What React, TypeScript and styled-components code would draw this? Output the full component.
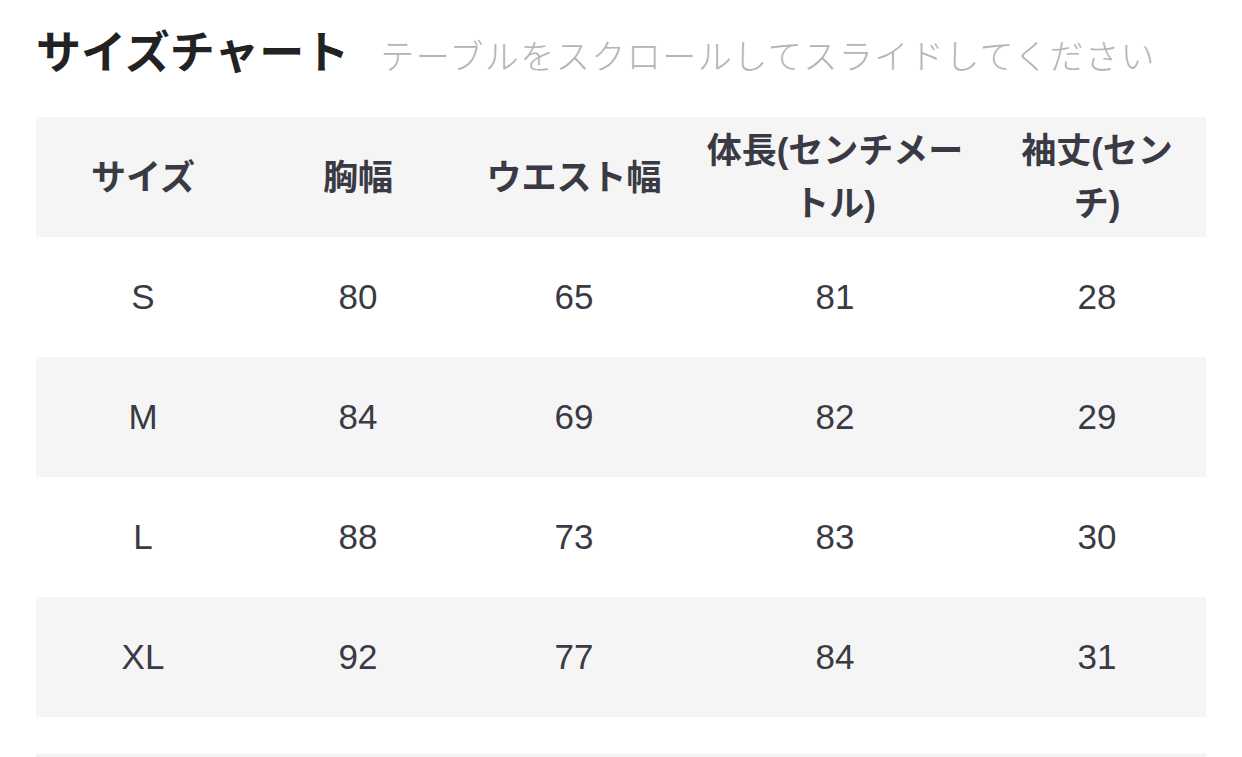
import React, { FC } from 'react';
import styled, { createGlobalStyle } from 'styled-components';

const GlobalStyle = createGlobalStyle`
  html, body {
    margin: 0;
    padding: 0;
    background: #fff;
  }
  body {
    font-family: 'Liberation Sans', 'Noto Sans CJK JP', sans-serif;
  }
`;

const Page = styled.div`
  width: 1242px;
  height: 757px;
  overflow: hidden;
  padding: 0 36px;
  box-sizing: border-box;
`;

const Heading = styled.div`
  display: flex;
  align-items: baseline;
  height: 48px;
  white-space: nowrap;
  padding-top: 26px;
  margin-bottom: 43px;
`;

const Title = styled.h2`
  flex-shrink: 0;
  margin: 0;
  font-family: 'Noto Sans CJK JP', sans-serif;
  font-weight: 700;
  font-size: 45px;
  line-height: 48px;
  color: #222;
`;

const Hint = styled.span`
  flex-shrink: 0;
  margin-left: 31px;
  font-family: 'Noto Sans CJK JP', sans-serif;
  font-weight: 300;
  font-size: 34px;
  line-height: 48px;
  letter-spacing: 1.5px;
  color: #b4b4b4;
`;

const Table = styled.table`
  width: 1170px;
  table-layout: fixed;
  border-collapse: collapse;
`;

const Row = styled.tr<{ $shaded: boolean }>`
  height: 120px;
  background: ${(p) => (p.$shaded ? '#f5f5f5' : '#fff')};
`;

const HeadCell = styled.th`
  padding: 0 18px;
  text-align: center;
  vertical-align: middle;
  font-family: 'Liberation Sans', 'Noto Sans CJK JP', sans-serif;
  font-weight: 700;
  font-size: 35px;
  line-height: 53px;
  color: #3a3a44;
`;

const Cell = styled.td`
  padding: 0 18px;
  text-align: center;
  vertical-align: middle;
  font-size: 35px;
  color: #3a3a44;
`;

const NextBlock = styled.div`
  margin-top: 36px;
  height: 60px;
  background: #f5f5f5;
  border-top: 1px solid #f9f9f9;
`;

const widths = [214, 216, 216, 306, 218];
const headers = ['サイズ', '胸幅', 'ウエスト幅', '体長(センチメートル)', '袖丈(センチ)'];
const rows = [
  ['S', '80', '65', '81', '28'],
  ['M', '84', '69', '82', '29'],
  ['L', '88', '73', '83', '30'],
  ['XL', '92', '77', '84', '31'],
];

const App: FC = () => (
  <Page>
    <GlobalStyle />
    <Heading>
      <Title>サイズチャート</Title>
      <Hint>テーブルをスクロールしてスライドしてください</Hint>
    </Heading>
    <Table>
      <colgroup>
        {widths.map((w, i) => (
          <col key={i} style={{ width: w }} />
        ))}
      </colgroup>
      <thead>
        <Row $shaded>
          {headers.map((h) => (
            <HeadCell key={h}>{h}</HeadCell>
          ))}
        </Row>
      </thead>
      <tbody>
        {rows.map((r, i) => (
          <Row key={r[0]} $shaded={i % 2 === 1}>
            {r.map((v, j) => (
              <Cell key={j}>{v}</Cell>
            ))}
          </Row>
        ))}
      </tbody>
    </Table>
    <NextBlock />
  </Page>
);

export default App;
